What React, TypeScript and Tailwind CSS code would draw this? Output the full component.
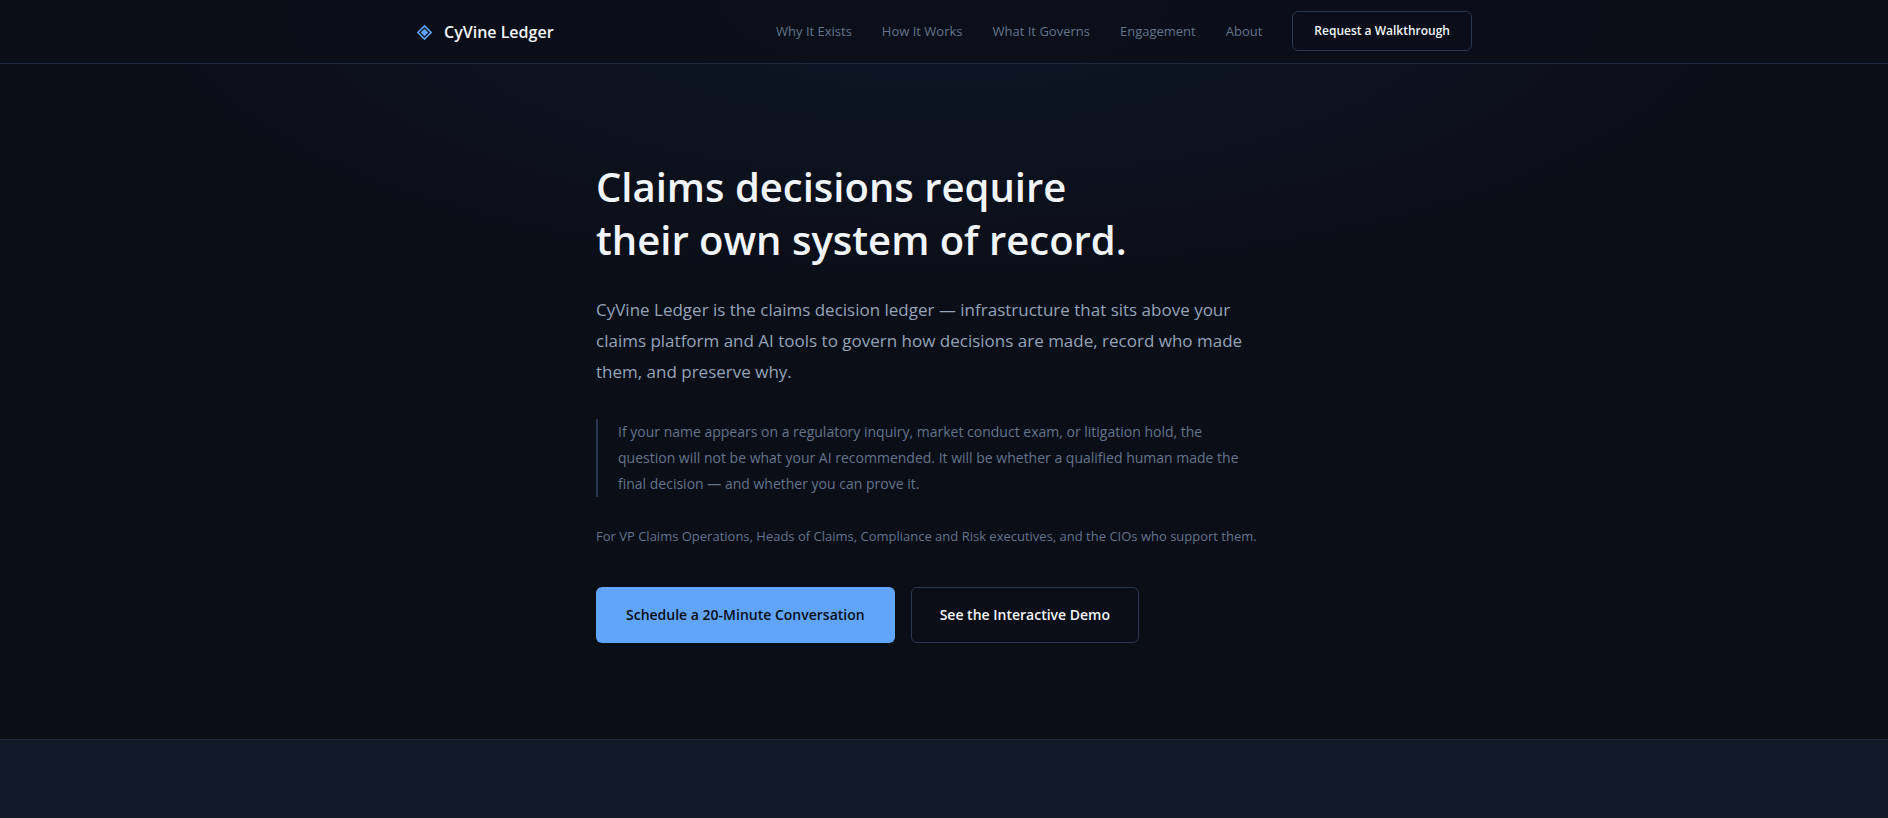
const navLinks = [
  "Why It Exists",
  "How It Works",
  "What It Governs",
  "Engagement",
  "About",
];

const Logo = () => (
  <a href="#" className="flex items-center gap-3 pt-px text-slate-100">
    <svg width="16" height="16" viewBox="0 0 16 16" fill="none">
      <path d="M8.5 1.9 15.1 8.5 8.5 15.1 1.9 8.5Z" stroke="#60a5fa" strokeWidth="1.5" />
      <path d="M8.5 4.7 12.3 8.5 8.5 12.3 4.7 8.5Z" fill="#60a5fa" />
    </svg>
    <span className="text-base font-semibold">CyVine Ledger</span>
  </a>
);

const Header = () => (
  <header className="border-b border-[#1e293b] bg-[#0a0e17]/85">
    <div className="mx-auto flex h-[63px] max-w-[1120px] items-center justify-between px-8">
      <Logo />
      <nav className="flex items-center gap-[30px] pb-px text-[13px] text-[#64748b]">
        {navLinks.map((link) => (
          <a key={link} href="#" className="pt-0.5 whitespace-nowrap">
            {link}
          </a>
        ))}
        <button className="h-10 rounded-md border border-[#2a3750] px-[21px] text-xs font-semibold whitespace-nowrap text-slate-100">
          Request a Walkthrough
        </button>
      </nav>
    </div>
  </header>
);

const Hero = () => (
  <section className="mx-auto w-full max-w-[760px] px-8 py-24">
    <h1 className="text-[40px] leading-[53px] font-semibold text-slate-100">
      Claims decisions require
      <br />
      their own system of record.
    </h1>
    <p className="mt-7 max-w-[660px] text-[17px] leading-[31px] text-[#94a3b8]">
      CyVine Ledger is the claims decision ledger — infrastructure that sits
      above your claims platform and AI tools to govern how decisions are made,
      record who made them, and preserve why.
    </p>
    <blockquote className="mt-8 max-w-[660px] border-l-2 border-[#2a3750] pl-5 text-sm leading-[26px] text-[#64748b]">
      If your name appears on a regulatory inquiry, market conduct exam, or
      litigation hold, the question will not be what your AI recommended. It
      will be whether a qualified human made the final decision — and whether
      you can prove it.
    </blockquote>
    <p className="mt-7 text-[13px] leading-[22px] text-[#64748b]">
      For VP Claims Operations, Heads of Claims, Compliance and Risk executives,
      and the CIOs who support them.
    </p>
    <div className="mt-10 flex gap-4 text-sm font-semibold">
      <button className="h-14 rounded-md bg-[#60a5fa] px-[30px] text-[#0a0e17]">
        Schedule a 20-Minute Conversation
      </button>
      <button className="h-14 rounded-md border border-[#2a3750] px-7 text-slate-100">
        See the Interactive Demo
      </button>
    </div>
  </section>
);

const App = () => {
  return (
    <div className="flex min-h-screen flex-col bg-[#0a0e17] bg-[radial-gradient(ellipse_46%_300px_at_50%_0px,#0e1626,#0a0e17)] font-['Open_Sans',sans-serif]">
      <Header />
      <main className="flex grow flex-col">
        <Hero />
        <section className="grow border-t border-[#1e293b] bg-[#111827]" />
      </main>
    </div>
  );
};

export default App;
